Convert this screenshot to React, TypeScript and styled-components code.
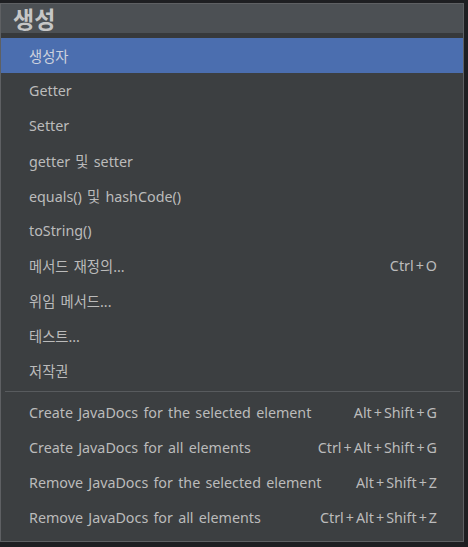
import React from "react";
import styled, { createGlobalStyle } from "styled-components";

const Global = createGlobalStyle`
  html, body { margin: 0; padding: 0; background: #1e1f22; }
  body { width: 468px; height: 547px; overflow: hidden; }
  * { box-sizing: border-box; }
`;

const Page = styled.div`
  padding-top: 3px;
  width: 468px;
  height: 547px;
`;

const Panel = styled.div`
  width: 464px;
  height: 539px;
  border: 1px solid #5e6063;
  background: #3c3f41;
  display: flex;
  flex-direction: column;
  font-family: "Noto Sans", "Noto Sans CJK KR", sans-serif;
`;

const Header = styled.div`
  height: 29px;
  background: #4c5054;
  color: #c6c6c6;
  font-family: "Noto Sans CJK KR", sans-serif;
  font-weight: 700;
  font-size: 23px;
  line-height: 29px;
  padding-left: 12px;
`;

const List = styled.div`
  border-top: 5px solid #37393b;
  display: flex;
  flex-direction: column;
`;

const Row = styled.div<{ $selected?: boolean }>`
  height: 35px;
  display: flex;
  align-items: center;
  justify-content: space-between;
  padding: 0 26px 0 28px;
  font-size: 14.3px;
  word-spacing: 1.5px;
  color: ${(p) => (p.$selected ? "#cdd2de" : "#bbbbbb")};
  background: ${(p) => (p.$selected ? "#4b6eaf" : "transparent")};
  white-space: nowrap;
`;

const Shortcut = styled.span`
  color: #bbbbbb;
  display: flex;
`;

const Plus = styled.span`
  margin: 0 2px;
`;

const Separator = styled.div`
  height: 1px;
  margin: 3px 3px 3px 4px;
  background: #585b5e;
`;

const top: [string, string?][] = [
  ["생성자"],
  ["Getter"],
  ["Setter"],
  ["getter 및 setter"],
  ["equals() 및 hashCode()"],
  ["toString()"],
  ["메서드 재정의...", "Ctrl+O"],
  ["위임 메서드..."],
  ["테스트..."],
  ["저작권"],
];

const bottom: [string, string][] = [
  ["Create JavaDocs for the selected element", "Alt+Shift+G"],
  ["Create JavaDocs for all elements", "Ctrl+Alt+Shift+G"],
  ["Remove JavaDocs for the selected element", "Alt+Shift+Z"],
  ["Remove JavaDocs for all elements", "Ctrl+Alt+Shift+Z"],
];

function Keys({ combo }: { combo: string }) {
  const parts = combo.split("+");
  return (
    <Shortcut>
      {parts.map((k, i) => (
        <React.Fragment key={i}>
          {i > 0 && <Plus>+</Plus>}
          <span>{k}</span>
        </React.Fragment>
      ))}
    </Shortcut>
  );
}

export default function App() {
  return (
    <>
      <Global />
      <Page>
        <Panel>
          <Header>생성</Header>
          <List>
            {top.map(([label, sc], i) => (
              <Row key={label} $selected={i === 0}>
                <span>{label}</span>
                {sc && <Keys combo={sc} />}
              </Row>
            ))}
            <Separator />
            {bottom.map(([label, sc]) => (
              <Row key={label}>
                <span>{label}</span>
                <Keys combo={sc} />
              </Row>
            ))}
          </List>
        </Panel>
      </Page>
    </>
  );
}
